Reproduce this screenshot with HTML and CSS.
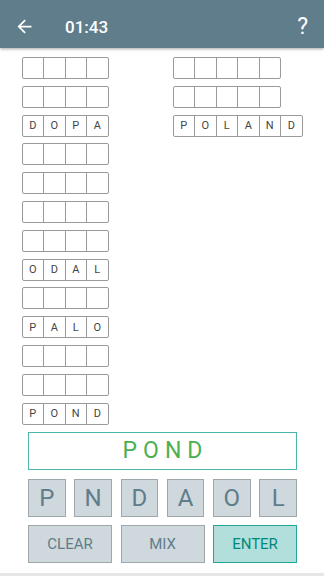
FILE: index.html
```html
<!DOCTYPE html>
<html lang="en">

<head>
    <meta charset="UTF-8">
    <meta name="viewport" content="width=device-width, initial-scale=1.0">
    <title>Words</title>
    <link rel="stylesheet" href="styles.css">
</head>

<body>

    <header class="bar">
        <svg class="back" viewBox="0 0 24 24" width="21" height="21">
            <path d="M20 11H7.83l5.59-5.59L12 4l-8 8 8 8 1.41-1.41L7.83 13H20v-2z" fill="#fff"/>
        </svg>
        <span class="time">01:43</span>
        <span class="help">?</span>
    </header>

    <section class="board">
        <div class="col">
            <div class="word"><span></span><span></span><span></span><span></span></div>
            <div class="word"><span></span><span></span><span></span><span></span></div>
            <div class="word"><span>D</span><span>O</span><span>P</span><span>A</span></div>
            <div class="word"><span></span><span></span><span></span><span></span></div>
            <div class="word"><span></span><span></span><span></span><span></span></div>
            <div class="word"><span></span><span></span><span></span><span></span></div>
            <div class="word"><span></span><span></span><span></span><span></span></div>
            <div class="word"><span>O</span><span>D</span><span>A</span><span>L</span></div>
            <div class="word"><span></span><span></span><span></span><span></span></div>
            <div class="word"><span>P</span><span>A</span><span>L</span><span>O</span></div>
            <div class="word"><span></span><span></span><span></span><span></span></div>
            <div class="word"><span></span><span></span><span></span><span></span></div>
            <div class="word"><span>P</span><span>O</span><span>N</span><span>D</span></div>
        </div>
        <div class="col">
            <div class="word"><span></span><span></span><span></span><span></span><span></span></div>
            <div class="word"><span></span><span></span><span></span><span></span><span></span></div>
            <div class="word"><span>P</span><span>O</span><span>L</span><span>A</span><span>N</span><span>D</span></div>
        </div>
    </section>

    <section class="controls">
        <div class="entry">POND</div>
        <div class="tiles">
            <button class="tile">P</button>
            <button class="tile">N</button>
            <button class="tile">D</button>
            <button class="tile">A</button>
            <button class="tile">O</button>
            <button class="tile">L</button>
        </div>
        <div class="actions">
            <button class="act">CLEAR</button>
            <button class="act">MIX</button>
            <button class="act enter">ENTER</button>
        </div>
    </section>

    <div class="navline"></div>

</body>

</html>
```

FILE: styles.css
```css
body {
    margin: 0;
    width: 324px;
    height: 576px;
    overflow: hidden;
    background-color: #fff;
    font-family: Roboto, "Liberation Sans", sans-serif;
    position: relative;
}

.bar {
    height: 48px;
    box-sizing: border-box;
    padding-top: 5px;
    background-color: #607d8b;
    color: #fff;
    display: flex;
    align-items: center;
    box-shadow: 0 1px 3px rgba(0, 0, 0, 0.35);
    position: relative;
}

.bar .back {
    margin-left: 14px;
}

.bar .time {
    margin-left: 30px;
    font-size: 17px;
    font-weight: 500;
}

.bar .help {
    margin-left: auto;
    margin-right: 16px;
    font-size: 23px;
}

.board {
    display: grid;
    grid-template-columns: 151px auto;
    padding: 9px 0 0 21.5px;
    align-items: start;
}

.col {
    display: flex;
    flex-direction: column;
    gap: 6.8px;
}

.word {
    display: flex;
}

.word span {
    width: 22.5px;
    height: 22px;
    box-sizing: border-box;
    border: 1px solid #9a9a9a;
    margin-left: -1px;
    display: flex;
    align-items: center;
    justify-content: center;
    font-size: 11px;
    color: #444;
}

.word span:first-child {
    margin-left: 0;
    border-radius: 2px 0 0 2px;
}

.word span:last-child {
    border-radius: 0 2px 2px 0;
}

.controls {
    margin: 7.4px 0 0 28px;
    width: 269px;
}

.entry {
    height: 38px;
    box-sizing: border-box;
    border: 1px solid #4db6ac;
    display: flex;
    align-items: center;
    justify-content: center;
    color: #4caf50;
    font-size: 23px;
    letter-spacing: 6px;
    text-indent: 6px;
}

.tiles,
.actions {
    display: flex;
    justify-content: space-between;
}

.tiles {
    margin-top: 9px;
}

.actions {
    margin-top: 8px;
}

.tile,
.act {
    font-family: Roboto, "Liberation Sans", sans-serif;
    background-color: #cfd8dc;
    border: 1px solid #9ea7ab;
    color: #607d8b;
    padding: 0;
    height: 38px;
}

.tile {
    width: 37.7px;
    font-size: 24px;
}

.act {
    width: 84px;
    font-size: 15px;
}

.act.enter {
    background-color: #b2dfdb;
    border-color: #26a69a;
    color: #00897b;
}

.navline {
    position: absolute;
    left: 0;
    right: 0;
    bottom: 0;
    height: 3px;
    background-color: #e6e6e6;
}
```
